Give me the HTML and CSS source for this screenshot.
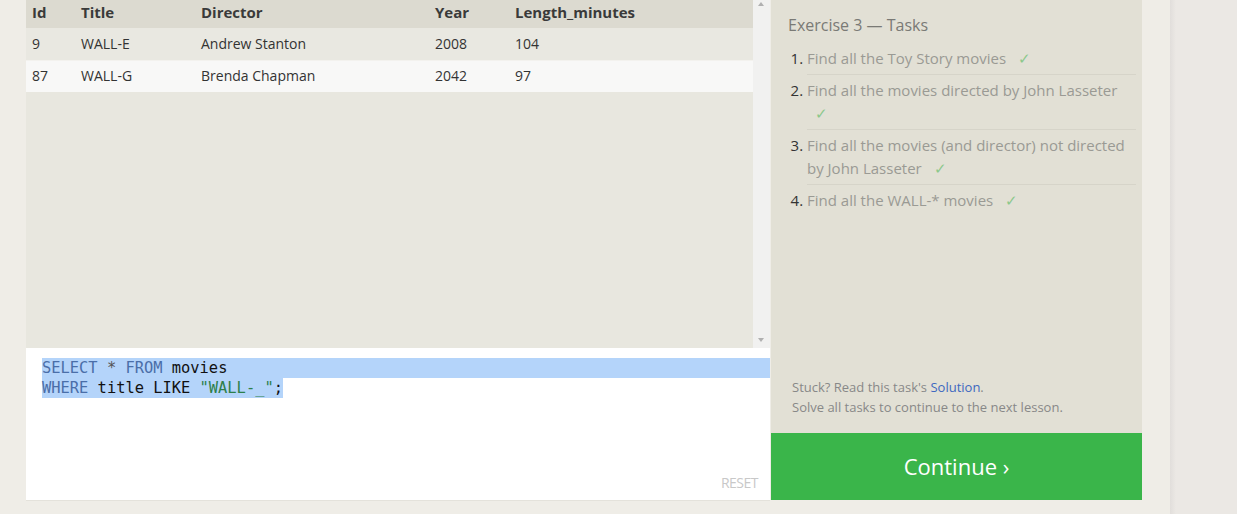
FILE: index.html
```html
<!DOCTYPE html>
<html>
<head>
<meta charset="utf-8">
<link rel="stylesheet" href="styles.css">
</head>
<body>
<div class="page">
  <div class="main">
    <div class="results">
      <div class="table-wrap">
        <table class="grid">
          <thead>
            <tr><th class="c-id">Id</th><th class="c-title">Title</th><th class="c-dir">Director</th><th class="c-year">Year</th><th class="c-len">Length_minutes</th></tr>
          </thead>
          <tbody>
            <tr class="odd"><td>9</td><td>WALL-E</td><td>Andrew Stanton</td><td>2008</td><td>104</td></tr>
            <tr class="even"><td>87</td><td>WALL-G</td><td>Brenda Chapman</td><td>2042</td><td>97</td></tr>
          </tbody>
        </table>
      </div>
      <div class="scrollbar">
        <span class="arrow up"></span>
        <span class="arrow down"></span>
      </div>
    </div>
    <div class="editor">
      <pre class="code"><span class="line full"><span class="kw">SELECT</span> <span class="op">*</span> <span class="kw">FROM</span> movies</span><span class="line"><span class="sel"><span class="kw">WHERE</span> title LIKE <span class="str">"WALL-_"</span>;</span></span></pre>
      <span class="reset">RESET</span>
    </div>
  </div>
  <div class="side">
    <div class="tasks">
      <h2 class="tasks-title">Exercise 3 — Tasks</h2>
      <ol class="task-list">
        <li><span class="task">Find all the Toy Story movies <span class="check">✓</span></span></li>
        <li><span class="task">Find all the movies directed by John Lasseter <span class="check">✓</span></span></li>
        <li><span class="task">Find all the movies (and director) not directed by John Lasseter <span class="check">✓</span></span></li>
        <li><span class="task">Find all the WALL-* movies <span class="check">✓</span></span></li>
      </ol>
      <div class="help">
        <p>Stuck? Read this task's <a class="link">Solution</a>.</p>
        <p>Solve all tasks to continue to the next lesson.</p>
      </div>
    </div>
    <div class="continue">Continue ›</div>
  </div>
  <div class="gutter"></div>
  <div class="right-strip"></div>
</div>
</body>
</html>
```

FILE: styles.css
```css
* { box-sizing: border-box; }
html, body { margin: 0; padding: 0; }
body {
  background: #efede7;
  font-family: "Open Sans", "Noto Sans", sans-serif;
  width: 1237px;
  height: 514px;
  overflow: hidden;
}
.page {
  display: flex;
  height: 514px;
  padding-left: 26px;
}
.main {
  width: 744px;
  display: flex;
  flex-direction: column;
  height: 501px;
}
.results {
  height: 348px;
  display: flex;
  background: #e8e7df;
}
.table-wrap {
  width: 727px;
  height: 348px;
}
.grid {
  border-collapse: collapse;
  width: 727px;
  font-size: 14px;
  color: #333;
}
.grid th {
  background: #dcdad0;
  height: 28px;
  text-align: left;
  font-weight: 700;
  font-size: 15px;
  padding: 0 0 4px 6px;
  color: #3a3a3a;
  line-height: 22px;
}
.grid td {
  height: 32px;
  padding: 0 0 0 6px;
  line-height: 20px;
}
.c-id { width: 49px; }
.c-title { width: 120px; }
.c-dir { width: 234px; }
.c-year { width: 80px; }
.odd td { background: #e9e8e1; border-bottom: 1px solid #f3f2ee; }
.even td { background: #f8f8f7; }
.scrollbar {
  width: 17px;
  height: 348px;
  background: #f1f1f0;
  position: relative;
}
.arrow {
  position: absolute;
  left: 5px;
  width: 0;
  height: 0;
  border-left: 3px solid transparent;
  border-right: 3px solid transparent;
}
.arrow.up { top: 2px; border-bottom: 4px solid #b0b0b0; }
.arrow.down { bottom: 6px; border-top: 4px solid #b0b0b0; }
.editor {
  height: 153px;
  background: #fff;
  position: relative;
  border-bottom: 1px solid #e4e2db;
}
.code {
  margin: 0;
  padding: 10px 0 0 16px;
  font-family: "DejaVu Sans Mono", "Liberation Mono", monospace;
  font-size: 15.4px;
  line-height: 20px;
  color: #111;
}
.line { display: block; height: 20px; }
.line.full { background: #b4d4fa; }
.sel { background: #b4d4fa; display: inline-block; height: 20px; }
.kw { color: #4a6ea8; }
.op { color: #555; }
.str { color: #2d7f4a; }
.reset {
  position: absolute;
  right: 12px;
  bottom: 8px;
  font-size: 14px;
  color: #c8c8c8;
  letter-spacing: -0.5px;
}
.side {
  width: 371px;
  margin-left: 1px;
  height: 500px;
  display: flex;
  flex-direction: column;
}
.tasks {
  flex: 1;
  background: #e2e0d5;
  padding: 14px 6px 0 17px;
  display: flex;
  flex-direction: column;
}
.tasks-title {
  margin: 0;
  font-weight: 400;
  font-size: 16px;
  line-height: 22px;
  color: #7a7a75;
}
.task-list {
  margin: 11px 0 0 0;
  padding: 0 0 0 19px;
  color: #333;
  font-size: 15px;
  line-height: 23px;
}
.task {
  display: block;
  color: #9a9a94;
  border-bottom: 1px solid #d6d4c9;
  padding: 4px 0 4px 0;
}
.task-list li:last-child .task { border-bottom: none; }
.task-list li:first-child .task { padding-top: 0; }
.check {
  color: #8cc88c;
  margin-left: 8px;
}
.help {
  margin-top: auto;
  padding-bottom: 16px;
  font-size: 13px;
  line-height: 20px;
  color: #888;
  padding-left: 4px;
}
.help p { margin: 0; }
.link { color: #3d68c0; }
.continue {
  height: 67px;
  background: #3ab54a;
  color: #fff;
  font-size: 22px;
  display: flex;
  align-items: center;
  justify-content: center;
  padding-bottom: 2px;
}
.gutter { width: 28px; }
.right-strip {
  flex: 1;
  background: linear-gradient(to right, #e1dedb 0, #ebe8e4 6px, #ebe8e4 100%);
}
```
